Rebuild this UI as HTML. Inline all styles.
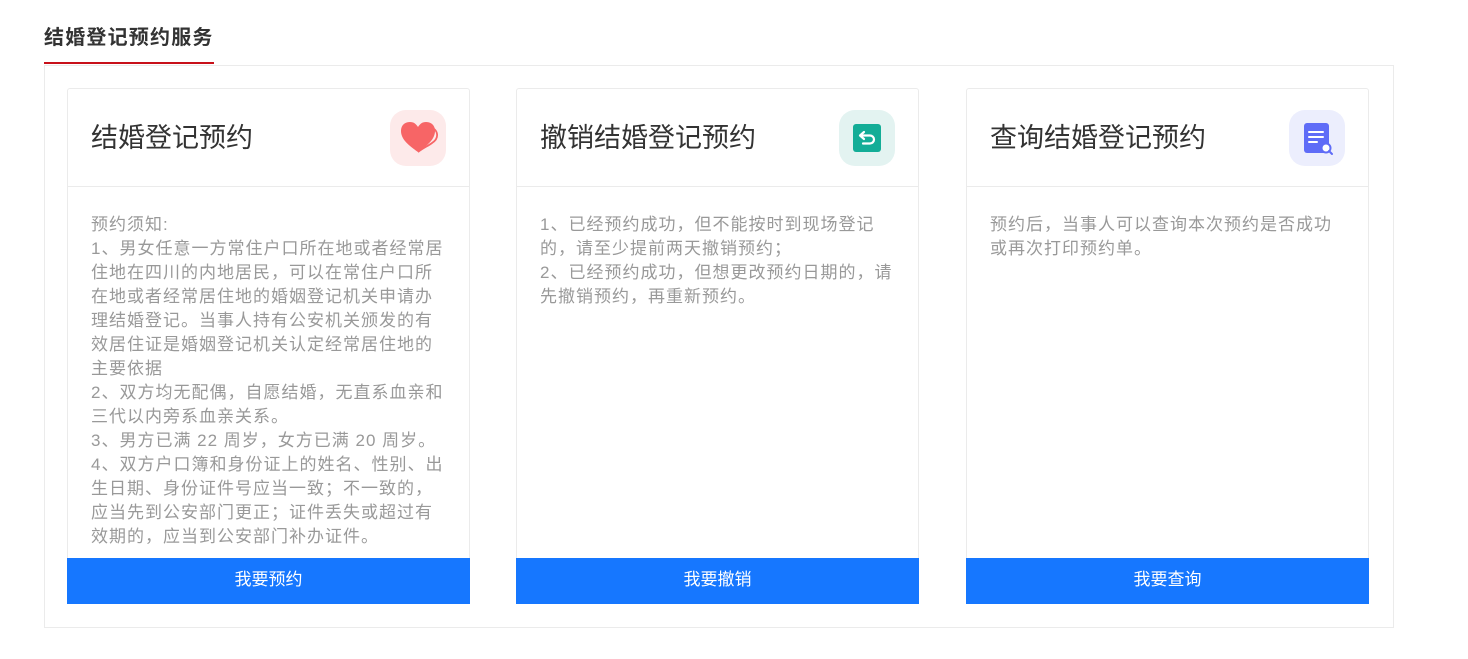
<!DOCTYPE html>
<html><head><meta charset="utf-8"><style>
*{margin:0;padding:0;box-sizing:border-box}
body{width:1468px;height:659px;background:#fff;font-family:"Liberation Sans","Noto Sans CJK SC",sans-serif;position:relative;overflow:hidden}
.t{position:absolute;left:44px;top:24px;font-size:20px;font-weight:bold;color:#333;line-height:28px;letter-spacing:1.2px}
.ul{position:absolute;left:44px;top:62px;width:170px;height:2px;background:#c8111a}
.box{position:absolute;left:44px;top:65px;width:1350px;height:563px;border:1px solid #ebebeb}
.card{position:absolute;top:88px;width:403px;height:516px;border:1px solid #ebebeb;border-radius:3px;background:#fff}
.hd{height:98px;border-bottom:1px solid #ebebeb;position:relative}
.hd h3{position:absolute;left:23px;top:32px;font-size:27px;font-weight:normal;color:#333;line-height:34px}
.ic{position:absolute;right:23px;top:21px;width:56px;height:56px;border-radius:16px}
.bd{padding:26px 23px 0;font-size:17px;letter-spacing:1px;line-height:24px;color:#999;white-space:nowrap}
.btn{position:absolute;left:-1px;right:-1px;bottom:-1px;height:46px;background:#1677ff;color:#fff;font-size:17px;text-align:center;line-height:44px}
</style></head><body>
<div class="t">结婚登记预约服务</div>
<div class="ul"></div>
<div class="box"></div>
<div class="card" style="left:67px">
 <div class="hd"><h3>结婚登记预约</h3>
 <div class="ic" style="background:#fdeaea"><svg width="56" height="56" viewBox="0 0 56 56"><path d="M28 42 C18 35 11 29 11 21 C11 15 15 12 20 12 C24 12 26 14 28 17 C30 14 32 12 36 12 C41 12 45 15 45 21 C45 29 38 35 28 42Z" fill="#f76566"/><path d="M40 17 C48 19 50 28 42 33 C38 36 33 38 28 42" stroke="#f76566" stroke-width="1.8" fill="none"/></svg></div></div>
 <div class="bd">预约须知:<br>1、男女任意一方常住户口所在地或者经常居<br>住地在四川的内地居民，可以在常住户口所<br>在地或者经常居住地的婚姻登记机关申请办<br>理结婚登记。当事人持有公安机关颁发的有<br>效居住证是婚姻登记机关认定经常居住地的<br>主要依据<br>2、双方均无配偶，自愿结婚，无直系血亲和<br>三代以内旁系血亲关系。<br>3、男方已满 22 周岁，女方已满 20 周岁。<br>4、双方户口簿和身份证上的姓名、性别、出<br>生日期、身份证件号应当一致；不一致的，<br>应当先到公安部门更正；证件丢失或超过有<br>效期的，应当到公安部门补办证件。</div>
 <div class="btn">我要预约</div>
</div>
<div class="card" style="left:516px">
 <div class="hd"><h3>撤销结婚登记预约</h3>
 <div class="ic" style="background:#e3f3f1"><svg width="56" height="56" viewBox="0 0 56 56"><rect x="14" y="14" width="28" height="28" rx="3" fill="#13ad97"/><path d="M25 22 L21 25.5 L25 29 M21.5 25.5 H31 A4 4 0 0 1 31 33.5 H24" stroke="#fff" stroke-width="2.2" fill="none" stroke-linecap="round" stroke-linejoin="round"/></svg></div></div>
 <div class="bd">1、已经预约成功，但不能按时到现场登记<br>的，请至少提前两天撤销预约；<br>2、已经预约成功，但想更改预约日期的，请<br>先撤销预约，再重新预约。</div>
 <div class="btn">我要撤销</div>
</div>
<div class="card" style="left:966px">
 <div class="hd"><h3>查询结婚登记预约</h3>
 <div class="ic" style="background:#eceefd"><svg width="56" height="56" viewBox="0 0 56 56"><rect x="15" y="13" width="25" height="30" rx="3" fill="#5f6cf7"/><path d="M20 22H34M20 27H34M20 32H28" stroke="#fff" stroke-width="2" stroke-linecap="round"/><circle cx="37" cy="38" r="4.5" fill="#fff" stroke="#5f6cf7" stroke-width="2"/><path d="M40 41L43 44" stroke="#5f6cf7" stroke-width="2" stroke-linecap="round"/></svg></div></div>
 <div class="bd">预约后，当事人可以查询本次预约是否成功<br>或再次打印预约单。</div>
 <div class="btn">我要查询</div>
</div>
</body></html>
